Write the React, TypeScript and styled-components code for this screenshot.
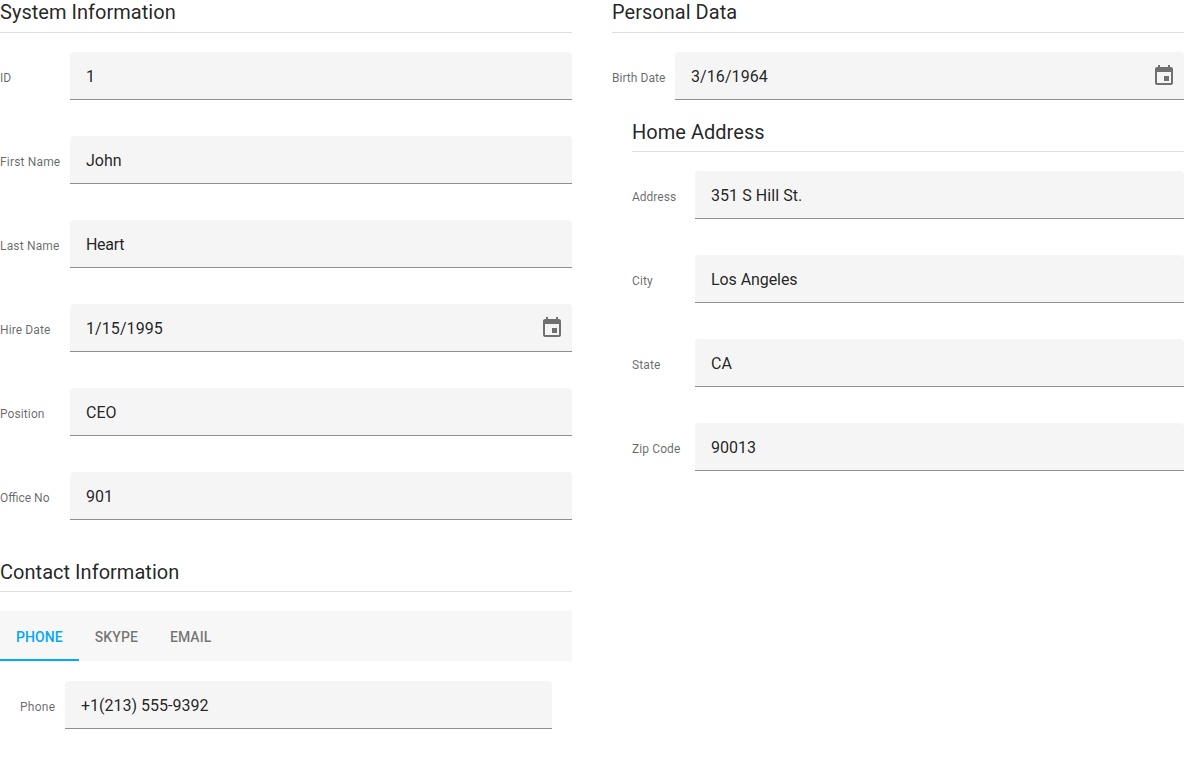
import React from "react";
import styled, { createGlobalStyle } from "styled-components";

const GlobalStyle = createGlobalStyle`
  *, *::before, *::after { box-sizing: border-box; }
  body {
    margin: 0;
    background: #fff;
    color: rgba(0, 0, 0, 0.87);
    font-family: Roboto, "Liberation Sans", sans-serif;
    overflow: hidden;
  }
`;

const Form = styled.main`
  display: grid;
  grid-template-columns: 572px 572px;
  column-gap: 40px;
  align-items: start;
`;

const Group = styled.section<{ $top?: number; $indent?: number }>`
  padding-top: ${(p) => p.$top ?? 0}px;
  padding-left: ${(p) => p.$indent ?? 0}px;
`;

const Caption = styled.h2<{ $height?: number }>`
  margin: 0 0 19px;
  height: ${(p) => p.$height ?? 33}px;
  font-size: 20px;
  font-weight: 400;
  line-height: 24px;
  letter-spacing: 0.03px;
  border-bottom: 1px solid #e0e0e0;
`;

const Fields = styled.div`
  display: flex;
  flex-direction: column;
  gap: 36px;
`;

const Row = styled.label`
  display: flex;
  height: 48px;
`;

const Label = styled.span<{ $width: number; $tracking: number }>`
  flex: 0 0 ${(p) => p.$width}px;
  padding-top: 18px;
  font-size: 12px;
  line-height: 16px;
  letter-spacing: ${(p) => p.$tracking}px;
  color: rgba(0, 0, 0, 0.6);
  white-space: nowrap;
`;

const Editor = styled.span`
  flex: 1;
  min-width: 0;
  display: flex;
  align-items: center;
  padding-right: 8px;
  background: rgba(0, 0, 0, 0.04);
  border-bottom: 1px solid rgba(0, 0, 0, 0.42);
  border-radius: 4px 4px 0 0;
`;

const Input = styled.input<{ $tracking: number }>`
  flex: 1;
  min-width: 0;
  height: 47px;
  padding: 1px 0 0 16px;
  border: 0;
  outline: 0;
  background: transparent;
  color: rgba(0, 0, 0, 0.87);
  font: 400 16px Roboto, "Liberation Sans", sans-serif;
  letter-spacing: ${(p) => p.$tracking}px;
`;

const Icon = styled.svg`
  width: 24px;
  height: 24px;
  fill: rgba(0, 0, 0, 0.54);
`;

const Tabs = styled.nav`
  display: flex;
  height: 50px;
  background: #f7f7f7;
`;

const Tab = styled.button<{ $active?: boolean }>`
  padding: 4px 16px 0;
  border: 0;
  border-bottom: 2px solid ${(p) => (p.$active ? "#03a9f4" : "transparent")};
  background: transparent;
  color: ${(p) => (p.$active ? "#03a9f4" : "rgba(0, 0, 0, 0.54)")};
  font: 500 14px Roboto, "Liberation Sans", sans-serif;
  letter-spacing: 0.08px;
  text-transform: uppercase;
`;

const TabPanel = styled.div`
  padding: 20px;
`;

type FieldProps = {
  label: string;
  value: string;
  labelWidth: number;
  labelTracking?: number;
  tracking?: number;
  date?: boolean;
};

const Field = ({ label, value, labelWidth, labelTracking = 0.1, tracking = 0, date }: FieldProps) => (
  <Row>
    <Label $width={labelWidth} $tracking={labelTracking}>{label}</Label>
    <Editor>
      <Input defaultValue={value} $tracking={tracking} />
      {date && (
        <Icon viewBox="0 0 24 24" aria-hidden="true">
          <path d="M19 3h-1V1h-2v2H8V1H6v2H5c-1.1 0-2 .9-2 2v14c0 1.1.9 2 2 2h14c1.1 0 2-.9 2-2V5c0-1.1-.9-2-2-2zm0 16H5V8h14v11zm-2-7h-5v5h5z" />
        </Icon>
      )}
    </Editor>
  </Row>
);

export default function App() {
  return (
    <>
      <GlobalStyle />
      <Form>
        <div>
          <Group>
            <Caption>System Information</Caption>
            <Fields>
              <Field label="ID" value="1" labelWidth={70} />
              <Field label="First Name" value="John" labelWidth={70} labelTracking={0.17} />
              <Field label="Last Name" value="Heart" labelWidth={70} labelTracking={0.17} tracking={-0.3} />
              <Field label="Hire Date" value="1/15/1995" labelWidth={70} tracking={0.08} date />
              <Field label="Position" value="CEO" labelWidth={70} />
              <Field label="Office No" value="901" labelWidth={70} labelTracking={0} />
            </Fields>
          </Group>
          <Group $top={40}>
            <Caption $height={32}>Contact Information</Caption>
            <Tabs>
              <Tab $active>Phone</Tab>
              <Tab>Skype</Tab>
              <Tab>Email</Tab>
            </Tabs>
            <TabPanel>
              <Field label="Phone" value="+1(213) 555-9392" labelWidth={45} labelTracking={0.25} />
            </TabPanel>
          </Group>
        </div>
        <Group>
          <Caption>Personal Data</Caption>
          <Field label="Birth Date" value="3/16/1964" labelWidth={63} labelTracking={0.04} tracking={0.08} date />
          <Group $top={20} $indent={20}>
            <Caption $height={32}>Home Address</Caption>
            <Fields>
              <Field label="Address" value="351 S Hill St." labelWidth={63} labelTracking={0} tracking={0.06} />
              <Field label="City" value="Los Angeles" labelWidth={63} tracking={-0.08} />
              <Field label="State" value="CA" labelWidth={63} />
              <Field label="Zip Code" value="90013" labelWidth={63} />
            </Fields>
          </Group>
        </Group>
      </Form>
    </>
  );
}
